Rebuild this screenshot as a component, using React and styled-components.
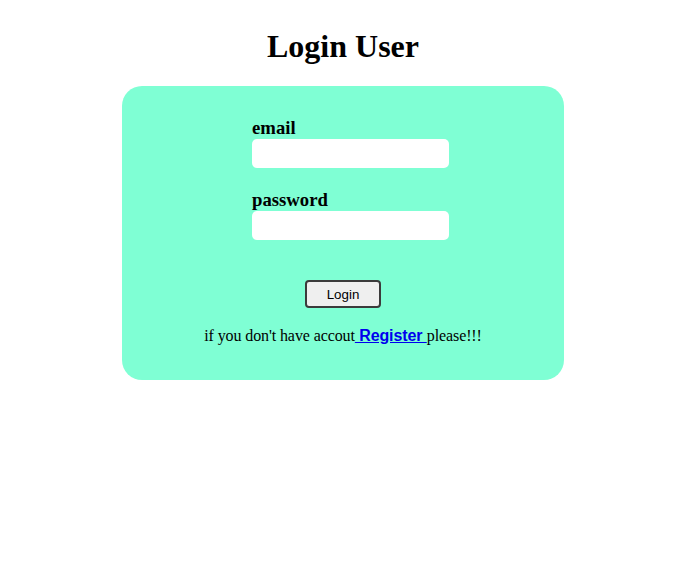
import React from "react";
import styled, { createGlobalStyle } from "styled-components";

const GlobalStyle = createGlobalStyle`
  body {
    margin: 0;
    background: #ffffff;
    font-family: "Liberation Serif", "Times New Roman", serif;
    color: #000000;
  }
`;

const Page = styled.div`
  width: 686px;
  display: flex;
  flex-direction: column;
  align-items: center;
  padding-top: 28px;
`;

const Title = styled.h1`
  margin: 0 0 21px 0;
  font-size: 32px;
  line-height: 37px;
  font-weight: bold;
`;

const Card = styled.div`
  width: 442px;
  box-sizing: border-box;
  background: #7fffd4;
  border-radius: 20px;
  padding: 31px 0 35px 0;
  display: flex;
  flex-direction: column;
  align-items: center;
`;

const Form = styled.form`
  align-self: stretch;
  display: flex;
  flex-direction: column;
  padding-left: 130px;
`;

const Field = styled.div`
  display: flex;
  flex-direction: column;
  margin-bottom: ${(p) => (p.last ? "0" : "21px")};
`;

const Label = styled.label`
  font-size: 18.72px;
  line-height: 22px;
  font-weight: bold;
`;

const Input = styled.input`
  width: 197px;
  height: 29px;
  box-sizing: border-box;
  border: none;
  border-radius: 5px;
  background: #ffffff;
  outline: none;
`;

const Button = styled.button`
  align-self: center;
  margin: 40px 0 0 -130px;
  width: 76px;
  height: 28px;
  box-sizing: border-box;
  background: #efefef;
  border: 2px solid #3b3b3b;
  border-radius: 4px;
  font-family: "Liberation Sans", Arial, sans-serif;
  font-size: 13.33px;
  color: #000000;
`;

const Note = styled.p`
  margin: 19px 0 0 0;
  font-size: 16px;
  line-height: 18px;
  letter-spacing: -0.1px;
`;

const RegisterLink = styled.a`
  font-family: "Liberation Sans", Arial, sans-serif;
  font-weight: bold;
  color: #0000ee;
  text-decoration: underline;
`;

export default function App() {
  return (
    <>
      <GlobalStyle />
      <Page>
        <Title>Login User</Title>
        <Card>
          <Form onSubmit={(e) => e.preventDefault()}>
            <Field>
              <Label>email</Label>
              <Input type="email" />
            </Field>
            <Field last>
              <Label>password</Label>
              <Input type="password" />
            </Field>
            <Button type="submit">Login</Button>
          </Form>
          <Note>
            if you don't have accout
            <RegisterLink href="#"> Register </RegisterLink>
            please!!!
          </Note>
        </Card>
      </Page>
    </>
  );
}
